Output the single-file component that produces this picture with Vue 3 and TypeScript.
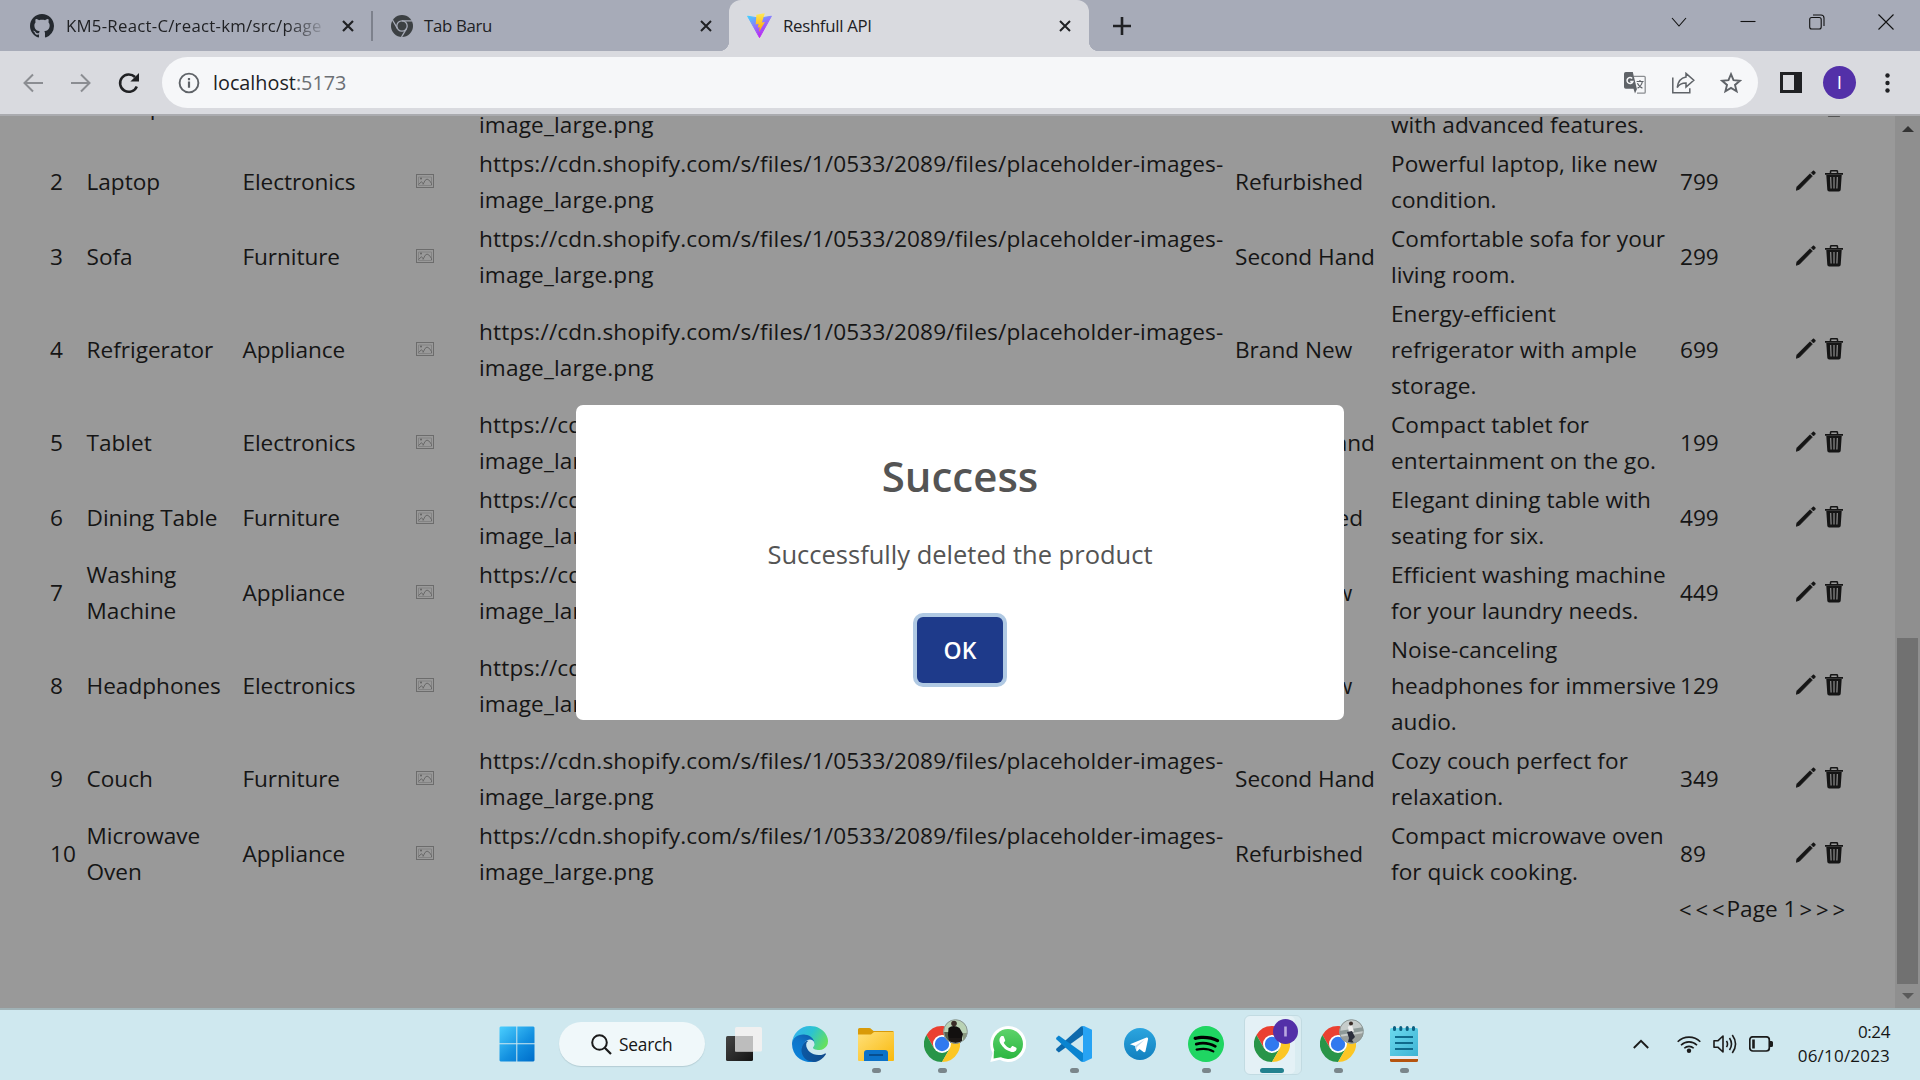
<script setup lang="ts">
interface Product {
  no: number
  name: string[]
  category: string
  condition: string
  description: string[]
  price: number
}

const products: Product[] = [
  { no: 1, name: ['Smartphone'], category: 'Electronics', condition: 'Brand New', description: ['Latest smartphone', 'with advanced features.'], price: 999 },
  { no: 2, name: ['Laptop'], category: 'Electronics', condition: 'Refurbished', description: ['Powerful laptop, like new', 'condition.'], price: 799 },
  { no: 3, name: ['Sofa'], category: 'Furniture', condition: 'Second Hand', description: ['Comfortable sofa for your', 'living room.'], price: 299 },
  { no: 4, name: ['Refrigerator'], category: 'Appliance', condition: 'Brand New', description: ['Energy-efficient', 'refrigerator with ample', 'storage.'], price: 699 },
  { no: 5, name: ['Tablet'], category: 'Electronics', condition: 'Second Hand', description: ['Compact tablet for', 'entertainment on the go.'], price: 199 },
  { no: 6, name: ['Dining Table'], category: 'Furniture', condition: 'Refurbished', description: ['Elegant dining table with', 'seating for six.'], price: 499 },
  { no: 7, name: ['Washing', 'Machine'], category: 'Appliance', condition: 'Brand New', description: ['Efficient washing machine', 'for your laundry needs.'], price: 449 },
  { no: 8, name: ['Headphones'], category: 'Electronics', condition: 'Brand New', description: ['Noise-canceling', 'headphones for immersive', 'audio.'], price: 129 },
  { no: 9, name: ['Couch'], category: 'Furniture', condition: 'Second Hand', description: ['Cozy couch perfect for', 'relaxation.'], price: 349 },
  { no: 10, name: ['Microwave', 'Oven'], category: 'Appliance', condition: 'Refurbished', description: ['Compact microwave oven', 'for quick cooking.'], price: 89 },
]

const imageUrl = ['https://cdn.shopify.com/s/files/1/0533/2089/files/placeholder-images-', 'image_large.png']

type App = 'tasks' | 'edge' | 'folder' | 'chrome' | 'whatsapp' | 'code' | 'telegram' | 'spotify' | 'notepad'
interface TaskItem { app: App; running?: boolean; active?: boolean; badge?: string }
const tasks: TaskItem[] = [
  { app: 'tasks' },
  { app: 'edge' },
  { app: 'folder', running: true },
  { app: 'chrome', running: true, badge: 'person' },
  { app: 'whatsapp' },
  { app: 'code', running: true },
  { app: 'telegram' },
  { app: 'spotify', running: true },
  { app: 'chrome', active: true, badge: 'initial' },
  { app: 'chrome', running: true, badge: 'photo' },
  { app: 'notepad', running: true },
]
</script>

<template>
  <div class="screen">
    <header class="tabs">
      <div class="tab first">
        <svg width="24" height="24" viewBox="0 0 16 16"><path fill="#24292f" d="M8 0C3.58 0 0 3.58 0 8c0 3.54 2.29 6.53 5.47 7.59.4.07.55-.17.55-.38 0-.19-.01-.82-.01-1.49-2.01.37-2.53-.49-2.69-.94-.09-.23-.48-.94-.82-1.13-.28-.15-.68-.52-.01-.53.63-.01 1.08.58 1.23.82.72 1.21 1.87.87 2.33.66.07-.52.28-.87.51-1.07-1.78-.2-3.64-.89-3.64-3.95 0-.87.31-1.59.82-2.15-.08-.2-.36-1.02.08-2.12 0 0 .67-.21 2.2.82.64-.18 1.32-.27 2-.27.68 0 1.36.09 2 .27 1.53-1.04 2.2-.82 2.2-.82.44 1.1.16 1.92.08 2.12.51.56.82 1.27.82 2.15 0 3.07-1.87 3.75-3.65 3.95.29.25.54.73.54 1.48 0 1.07-.01 1.93-.01 2.2 0 .21.15.46.55.38A8.013 8.013 0 0016 8c0-4.42-3.58-8-8-8z" /></svg>
        <span class="label fade">KM5-React-C/react-km/src/page</span>
        <svg class="x" width="12" height="12" viewBox="0 0 12 12"><path d="M1 1l10 10M11 1L1 11" stroke="#202124" stroke-width="2.2" /></svg>
      </div>
      <i class="sep"></i>
      <div class="tab second">
        <svg width="22" height="22" viewBox="0 0 22 22">
          <circle cx="11" cy="11" r="11" fill="#3c4043" />
          <g stroke="#a7abb8" stroke-width="1.3" fill="none"><circle cx="11" cy="11" r="5.2" /><path d="M11 5.8H21M6.5 13.6L1.5 5M15.5 13.6L10.5 22" /></g>
          <circle cx="11" cy="11" r="3.8" fill="#3c4043" />
        </svg>
        <span class="label">Tab Baru</span>
        <svg class="x" width="12" height="12" viewBox="0 0 12 12"><path d="M1 1l10 10M11 1L1 11" stroke="#202124" stroke-width="2" /></svg>
      </div>
      <div class="tab current">
        <svg width="25" height="25" viewBox="0 0 25 25">
          <defs>
            <linearGradient id="vite" x1="0" y1="0" x2=".6" y2="1"><stop offset="0" stop-color="#41d1ff" /><stop offset=".5" stop-color="#8f75ff" /><stop offset="1" stop-color="#c417ef" /></linearGradient>
            <linearGradient id="bolt" x1="0" y1="0" x2="0" y2="1"><stop offset="0" stop-color="#ffea55" /><stop offset="1" stop-color="#ffa000" /></linearGradient>
          </defs>
          <path d="M.6 3.2L12.5 5.2 24.4 3.2 12.5 24.6z" fill="url(#vite)" stroke="url(#vite)" stroke-linejoin="round" />
          <path d="M17.8.2L9.4 1.8 8.7 11.4l2.9-.7-.8 4 2-.6-.8 5L17.9 9l-3 .5z" fill="url(#bolt)" />
        </svg>
        <span class="label">Reshfull API</span>
        <svg class="x" width="12" height="12" viewBox="0 0 12 12"><path d="M1 1l10 10M11 1L1 11" stroke="#202124" stroke-width="2" /></svg>
      </div>
      <svg class="plus" width="18" height="18" viewBox="0 0 18 18"><path d="M9 0v18M0 9h18" stroke="#202124" stroke-width="2.6" /></svg>
      <div class="window">
        <svg width="16" height="16" viewBox="0 0 16 16"><path d="M1 4l7 8 7-8" /></svg>
        <svg width="16" height="16" viewBox="0 0 16 16"><path d="M.5 7.500h15" /></svg>
        <svg width="16" height="16" viewBox="0 0 16 16"><rect x=".7" y="3.5" width="11.5" height="11.5" rx="2" /><path d="M4 1h8q3 0 3 3v8" /></svg>
        <svg width="16" height="16" viewBox="0 0 16 16"><path d="M.5.5l15 15M15.5.5l-15 15" /></svg>
      </div>
    </header>

    <nav class="toolbar">
      <svg class="nav" width="20" height="20" viewBox="0 0 20 20"><path d="M20 10H2M10 1.5L1.5 10l8.5 8.5" /></svg>
      <svg class="nav" width="20" height="20" viewBox="0 0 20 20"><path d="M0 10h18M10 1.5l8.5 8.5-8.5 8.5" /></svg>
      <svg class="reload" width="22" height="22" viewBox="0 0 22 22"><path d="M18.8 14.500A8.700 8.700 0 1 1 17 5" fill="none" stroke="#202124" stroke-width="2.500" /><path d="M21 1v8.600h-8.600z" fill="#202124" /></svg>
      <div class="omnibox">
        <svg width="22" height="22" viewBox="0 0 22 22"><circle cx="11" cy="11" r="9.4" fill="none" stroke="#5f6368" stroke-width="1.9" /><path d="M11 9.6v6.2M11 6v2.2" stroke="#5f6368" stroke-width="2.2" /></svg>
        <span class="url">localhost<em>:5173</em></span>
        <svg class="tool" width="22" height="22" viewBox="0 0 22 22">
          <path d="M10 4.3h10.2q1 0 1 1v14.9q0 1-1 1H13" fill="none" stroke="#8a8d91" stroke-width="1.3" />
          <path d="M1.8 0h7l4 16.8H1.8Q0 16.800 0 15V1.800Q0 0 1.800 0zM9.500 16.800h3.600L11 21.500z" fill="#5f6368" />
          <path d="M8.200 6.400a3 3 0 1 0 .7 3H6.200" fill="none" stroke="#f6f7f9" stroke-width="1.500" />
          <path d="M12.600 9.500h7M16 8v1.500M18.400 9.500c-.6 3-2.600 5.400-4.800 6.600M13.400 11.200c1 2.200 2.800 4 5 4.900" fill="none" stroke="#5f6368" stroke-width="1.200" />
        </svg>
        <svg class="tool" width="23" height="22" viewBox="0 0 23 22"><path d="M.8 5.500v15.300h17v-4.500M14 1.400l7.800 6.800-7.800 6.800v-4C9.600 11 7 12.500 5.200 15.500 6 9.500 9 5.800 14 5z" fill="none" stroke="#5f6368" stroke-width="1.500" /></svg>
        <svg class="tool" width="22" height="22" viewBox="0 0 22 22"><path d="M11 2.200l2.500 6 6.500.5-5 4.200 1.600 6.400L11 15.900l-5.600 3.400L7 12.900 2 8.700l6.500-.5z" fill="none" stroke="#5f6368" stroke-width="1.900" /></svg>
      </div>
      <svg class="panel" width="22" height="21" viewBox="0 0 22 21"><path d="M0 0h22v21H0zM3 3v15h11V3z" fill="#202124" fill-rule="evenodd" /></svg>
      <span class="avatar">I</span>
      <svg class="more" width="5" height="20" viewBox="0 0 5 20"><g fill="#202124"><circle cx="2.500" cy="2.500" r="2.200" /><circle cx="2.500" cy="10" r="2.200" /><circle cx="2.500" cy="17.500" r="2.200" /></g></svg>
    </nav>

    <main class="viewport">
      <div class="page">
        <div class="table">
          <div v-for="p in products" :key="p.no" class="row">
            <div>{{ p.no }}</div>
            <div class="name"><span v-for="l in p.name" :key="l">{{ l }}</span></div>
            <div class="cat">{{ p.category }}</div>
            <div>
              <svg class="broken" width="18" height="14" viewBox="0 0 18 14"><rect x=".5" y=".5" width="17" height="13" fill="none" stroke="#6c6c6c" /><path d="M2.500 11.500v-8.500h13v8.500z" fill="none" stroke="#838383" /><circle cx="5" cy="4.500" r="1" fill="#626262" /><path d="M2.500 10.500l3-2.800 2 2.500M7 10.500l2-4 2-1.500 2.500 1.500 2 3v1.500" fill="none" stroke="#686868" /></svg>
            </div>
            <div class="link"><span>{{ imageUrl[0] }}</span><span>{{ imageUrl[1] }}</span></div>
            <div class="cond">{{ p.condition }}</div>
            <div class="desc"><span v-for="l in p.description" :key="l">{{ l }}</span></div>
            <div>{{ p.price }}</div>
            <div class="actions">
              <svg width="20" height="21" viewBox="0 0 20 21"><path d="M.3 20.300L1 16.800 14 3.800l2.300 2.300L3.400 19.200z" fill="#151515" stroke="#151515" stroke-width=".8" stroke-linejoin="round" /><path d="M15.200 2.700l1.500-1.500q.8-.8 1.600 0l.7.700q.8.800 0 1.600L17.500 5z" fill="#151515" stroke="#151515" stroke-width=".6" /></svg>
              <svg width="18" height="22" viewBox="0 0 18 22"><path d="M5.500 3.200V1.700q0-1 1-1h5q1 0 1 1v1.500" fill="none" stroke="#151515" stroke-width="1.500" /><path d="M0 2.900h18v1.800H0zM1.300 5h15.400l-1 14.700q-.1 1.800-1.900 1.800H4.200q-1.800 0-1.900-1.800z" fill="#151515" /><path d="M5.700 7l.4 11.500M9 7v11.500M12.300 7l-.4 11.500" stroke="#999" stroke-width="1.100" /></svg>
            </div>
          </div>
        </div>
        <div class="pager"><span>&lt;</span><span>&lt;</span><span>&lt;</span><b>Page 1</b><span>&gt;</span><span>&gt;</span><span>&gt;</span></div>
      </div>
      <div class="scrollbar"><i class="up"></i><i class="thumb"></i><i class="down"></i></div>
      <section class="modal">
        <h2>Success</h2>
        <p>Successfully deleted the product</p>
        <button>OK</button>
      </section>
    </main>

    <footer class="taskbar">
      <svg class="start" width="36" height="36" viewBox="0 0 36 36">
        <defs><linearGradient id="win" gradientUnits="userSpaceOnUse" x1="0" y1="0" x2="32" y2="36"><stop offset="0" stop-color="#4cd0ff" /><stop offset=".6" stop-color="#1390e0" /><stop offset="1" stop-color="#0070cc" /></linearGradient></defs>
        <path d="M1.500.500H17.300V17.200H.500V1.500zM18.300.500H34.500l1 1V17.200h-17.200zM.500 18.300H17.300v17.200H1.500l-1-1zM18.300 18.300h17.200v16.200l-1 1h-16.200z" fill="url(#win)" />
      </svg>
      <div class="search">
        <svg width="21" height="21" viewBox="0 0 21 21"><circle cx="8.500" cy="8.500" r="7.300" fill="none" stroke="#1b1b1b" stroke-width="2" /><path d="M13.500 13.500l6.500 6.500" stroke="#1b1b1b" stroke-width="2.200" /></svg>
        <span>Search</span>
      </div>
      <div v-for="(t, i) in tasks" :key="i" class="task" :class="{ active: t.active }">
        <svg v-if="t.app === 'tasks'" width="36" height="36" viewBox="0 0 36 36">
          <defs><linearGradient id="tv" x1="0" y1="0" x2="1" y2="1"><stop offset="0" stop-color="#444" /><stop offset="1" stop-color="#141414" /></linearGradient></defs>
          <rect y="10" width="27" height="25" rx="1.500" fill="url(#tv)" /><rect x="9" y="1" width="27" height="24.500" rx="1.500" fill="#f0f0f0" /><path d="M9 10h18v15.500H9z" fill="#bdbdbd" />
        </svg>
        <svg v-else-if="t.app === 'edge'" width="36" height="36" viewBox="0 0 256 256">
          <defs>
            <linearGradient id="e1" x1="0" y1="0" x2="1" y2="0"><stop offset="0" stop-color="#0c59a4" /><stop offset="1" stop-color="#114a8b" /></linearGradient>
            <linearGradient id="e2" x1=".8" y1="0" x2=".3" y2="1"><stop offset="0" stop-color="#0f5aa8" /><stop offset=".4" stop-color="#0f74c8" /><stop offset="1" stop-color="#0a84dc" /></linearGradient>
            <linearGradient id="e3" x1="0" y1=".2" x2="1" y2=".6"><stop offset="0" stop-color="#35b1f1" /><stop offset=".5" stop-color="#2cc3d0" /><stop offset="1" stop-color="#66e05e" /></linearGradient>
          </defs>
          <path fill="url(#e1)" d="M235.680 195.460a93.730 93.730 0 0 1-10.540 4.710 101.870 101.870 0 0 1-35.900 6.460c-47.320 0-88.540-32.550-88.540-74.320a31.480 31.480 0 0 1 16.430-27.310c-42.800 1.800-53.800 46.400-53.800 72.530 0 73.880 68.090 81.370 82.760 81.370 7.910 0 19.840-2.300 27-4.560l1.310-.440a128.340 128.340 0 0 0 66.600-52.800 4 4 0 0 0-5.320-5.640z" />
          <path fill="url(#e2)" d="M105.730 241.420a79.200 79.200 0 0 1-22.740-21.340 80.720 80.720 0 0 1 29.530-120c3.120-1.470 8.450-4.130 15.540-4a32.350 32.350 0 0 1 25.690 13 31.880 31.880 0 0 1 6.360 18.660c0-.210 24.460-79.600-80-79.600-43.900 0-80 41.660-80 78.210a130.150 130.150 0 0 0 12.110 56 128 128 0 0 0 156.380 67.110 75.550 75.550 0 0 1-62.780-8z" />
          <path fill="url(#e3)" d="M152.330 148.860c-.810 1.050-3.300 2.500-3.300 5.660 0 2.610 1.700 5.120 4.720 7.230 14.380 10 41.490 8.680 41.560 8.680a59.560 59.560 0 0 0 30.270-8.350A61.380 61.380 0 0 0 256 109.190c.260-22.410-8-37.310-11.340-43.910C223.460 23.840 177.720 0 128 0A128 128 0 0 0 0 126.200c.480-36.540 36.800-66.050 80-66.050 3.500 0 23.460.340 42 10.070 16.340 8.580 24.900 18.940 30.850 29.210 6.180 10.670 7.280 24.150 7.280 29.520s-2.740 13.330-7.800 19.910z" />
        </svg>
        <svg v-else-if="t.app === 'folder'" width="36" height="36" viewBox="0 0 36 36">
          <defs><linearGradient id="fd" x1="0" y1="0" x2="1" y2="1"><stop offset="0" stop-color="#ffe07a" /><stop offset="1" stop-color="#f9b90c" /></linearGradient></defs>
          <path d="M0 10V3.500Q0 2 1.500 2H11q1.500 0 2.500 1.200L15.500 5H34.500q1.500 0 1.500 1.500V10z" fill="#d99a08" /><path d="M0 8.500h13l3-2.500h20v28q0 1-1 1H1q-1 0-1-1z" fill="url(#fd)" /><path d="M6 35V27q0-3 3-3h18q3 0 3 3v8z" fill="#0b72c9" /><path d="M11 29h14" stroke="#064a8a" stroke-width="1.800" />
        </svg>
        <svg v-else-if="t.app === 'chrome'" width="36" height="36" viewBox="0 0 36 36">
          <path fill="#ea4031" d="M2.410 9A18 18 0 0 1 33.590 9H18L10.200 22.500z" /><path fill="#289548" d="M2.410 9L10.200 22.500 25.800 22.500 18 36A18 18 0 0 1 2.410 9z" /><path fill="#fcc624" d="M33.590 9H18l7.800 13.500L18 36A18 18 0 0 0 33.590 9z" />
          <circle cx="18" cy="18" r="9" fill="#fff" /><circle cx="18" cy="18" r="7.200" fill="#3079ef" />
        </svg>
        <svg v-else-if="t.app === 'whatsapp'" width="36" height="36" viewBox="0 0 36 36">
          <defs><linearGradient id="wa" x1="0" y1="0" x2="0" y2="1"><stop offset="0" stop-color="#5dd36a" /><stop offset="1" stop-color="#2bb641" /></linearGradient></defs>
          <path d="M18 0A18 18 0 1 1 9.600 33.800L.300 36 2.600 27A18 18 0 0 1 18 0z" fill="#fff" /><circle cx="18" cy="18" r="15" fill="url(#wa)" />
          <path d="M4 24L3.600 32.600 12 31z" fill="#35bb4a" />
          <g transform="translate(0.900 1) scale(1.420)"><path fill="#fff" d="M17.472 14.382c-.297-.149-1.758-.867-2.030-.967-.273-.099-.471-.148-.670.150-.197.297-.767.966-.940 1.164-.173.199-.347.223-.644.075-.297-.150-1.255-.463-2.390-1.475-.883-.788-1.480-1.761-1.653-2.059-.173-.297-.018-.458.130-.606.134-.133.298-.347.446-.520.149-.174.198-.298.298-.497.099-.198.050-.371-.025-.520-.075-.149-.669-1.612-.916-2.207-.242-.579-.487-.500-.669-.510-.173-.008-.371-.010-.570-.010-.198 0-.520.074-.792.372-.272.297-1.040 1.016-1.040 2.479 0 1.462 1.065 2.875 1.213 3.074.149.198 2.096 3.200 5.077 4.487.709.306 1.262.489 1.694.625.712.227 1.360.195 1.871.118.571-.085 1.758-.719 2.006-1.413.248-.694.248-1.289.173-1.413-.074-.124-.272-.198-.570-.347z" /></g>
        </svg>
        <svg v-else-if="t.app === 'code'" width="36" height="36" viewBox="0 0 36 36">
          <path d="M2.800 26.500L.500 24.600Q-.300 23.500.500 22.500L25 .500 27 0v9z" fill="#0d69ac" /><path d="M2.800 9.500L.500 11.400Q-.300 12.500.500 13.500L25 35.500l2 .500V27z" fill="#0a84d0" /><path d="M26 .3L28 0l8 3.800v28.400L28 36l-2-.300 1-1.700V2z" fill="#27a3f4" />
        </svg>
        <svg v-else-if="t.app === 'telegram'" width="32" height="32" viewBox="0 0 32 32">
          <defs><linearGradient id="tg" x1="0" y1="0" x2="0" y2="1"><stop offset="0" stop-color="#2ba5df" /><stop offset="1" stop-color="#1280bf" /></linearGradient></defs>
          <circle cx="16" cy="16" r="16" fill="url(#tg)" /><path d="M6 16.200L22.500 9.600q1.800-.5 1.600 1.400L21.500 23.300q-.5 1.500-2 .7l-4-3-2.200 2.200q-.8.5-1-.5L11 18z" fill="#fff" /><path d="M11 18l9.500-6.300-7.800 7.600-.4 3.800z" fill="#b9d9ee" />
        </svg>
        <svg v-else-if="t.app === 'spotify'" width="36" height="36" viewBox="0 0 24 24">
          <circle cx="12" cy="12" r="11.500" fill="#000" /><path fill="#1fd662" d="M12 0C5.400 0 0 5.400 0 12s5.400 12 12 12 12-5.400 12-12S18.660 0 12 0zm5.521 17.340c-.240.359-.660.480-1.021.240-2.820-1.740-6.360-2.101-10.561-1.141-.418.122-.779-.179-.899-.539-.120-.421.180-.780.540-.900 4.560-1.021 8.520-.600 11.640 1.320.420.180.479.659.301 1.020zm1.440-3.300c-.301.420-.841.600-1.262.300-3.239-1.980-8.159-2.580-11.939-1.380-.479.120-1.020-.120-1.140-.600-.120-.480.120-1.021.600-1.141C9.600 9.900 15 10.561 18.720 12.840c.361.181.540.780.241 1.200zm.120-3.360C15.240 8.400 8.820 8.160 5.160 9.301c-.600.179-1.200-.181-1.380-.721-.180-.601.180-1.200.720-1.381 4.260-1.260 11.280-1.020 15.721 1.621.539.300.719 1.020.419 1.560-.299.421-1.020.599-1.559.300z" />
        </svg>
        <svg v-else width="28" height="36" viewBox="0 0 28 36">
          <defs><linearGradient id="np" x1="0" y1="0" x2="1" y2="1"><stop offset="0" stop-color="#6bd9ee" /><stop offset="1" stop-color="#3fb4d4" /></linearGradient></defs>
          <path d="M0 30h28v4.500Q28 36 26.500 36h-25Q0 36 0 34.500z" fill="#b5540f" /><path d="M0 28h28v5H0z" fill="#ececf0" /><path d="M0 4q0-2 1.500-2h25Q28 2 28 4v26H0z" fill="url(#np)" /><path d="M4.500 1.500v2M10.800 1.500v2M17.200 1.500v2M23.500 1.500v2" stroke="#0d5f80" stroke-width="3" stroke-linecap="round" /><path d="M5 11h18M5 17h18M5 23h18" stroke="#0f6a8c" stroke-width="2" />
        </svg>
        <svg v-if="t.badge" class="badge" width="25" height="25" viewBox="0 0 25 25">
          <defs><clipPath id="round"><circle cx="12.500" cy="12.500" r="12" /></clipPath></defs>
          <g v-if="t.badge === 'person'" clip-path="url(#round)"><path d="M0 0h25v25H0z" fill="#b9d2b4" /><path d="M0 13h6v12H0z" fill="#55604e" /><path d="M20 14h5v11h-5z" fill="#8b9a80" /><circle cx="11" cy="4.500" r="2.800" fill="#3a2c27" /><path d="M5.500 9q5-4 11 0l3.500 6-2 8H6l-1-7z" fill="#12100f" /><path d="M6 19h13v6H6z" fill="#1c1816" /></g>
          <g v-else-if="t.badge === 'photo'" clip-path="url(#round)"><path d="M0 0h25v25H0z" fill="#c6cccb" /><path d="M0 12l25-4v4L0 16z" fill="#8d9998" /><path d="M0 18l25-4v11H0z" fill="#9a9f9c" /><circle cx="12" cy="4.500" r="2" fill="#3a2c28" /><path d="M9 7.500l4-1 2 6-5 2z" fill="#eee" /><path d="M8 13l5-1 3 6-3 3 2 3-6-1 1-4z" fill="#2b2e3c" /></g>
          <circle v-else cx="12.500" cy="12.500" r="12.500" fill="#5330a8" />
          <circle v-if="t.badge !== 'initial'" cx="12.500" cy="12.500" r="11.800" fill="none" stroke="#8b9796" stroke-width="1" />
          <path v-else d="M12.500 7.500v10" stroke="#b9a8e0" stroke-width="2.600" />
        </svg>
        <i v-if="t.running || t.active" class="dot"></i>
      </div>
      <div class="tray">
        <svg width="16" height="10" viewBox="0 0 16 10"><path d="M.8 9L8 1.800 15.200 9" fill="none" stroke="#1b1b1b" stroke-width="1.900" /></svg>
        <svg class="wifi" width="24" height="18" viewBox="0 0 24 18"><g fill="none" stroke="#1b1b1b" stroke-width="1.600"><path d="M.7 6.800a16 16 0 0 1 22.600 0M4 10.200a11.300 11.300 0 0 1 16 0M7.300 13.300a6.600 6.600 0 0 1 9.400 0" /></g><circle cx="12" cy="15.700" r="2.200" fill="#1b1b1b" /></svg>
        <svg class="vol" width="24" height="20" viewBox="0 0 24 20"><g fill="none" stroke="#1b1b1b" stroke-width="1.600" stroke-linejoin="round"><path d="M1 6.800h3.800L10 2v16l-5.200-4.800H1zM13.500 6.800q2 3.200 0 6.400M16.500 4q4 6 0 12M19.300 1q6.500 9 0 18" /></g></svg>
        <svg class="bat" width="24" height="16" viewBox="0 0 24 16"><rect x=".8" y=".8" width="19.500" height="14.200" rx="3" fill="none" stroke="#1b1b1b" stroke-width="1.700" /><path d="M3.200 3.500h2.600v9H3.200zM21 5h1.500q1.500 0 1.500 1.500v3q0 1.500-1.500 1.500H21z" fill="#1b1b1b" /></svg>
        <div class="clock"><span>0:24</span><span class="date">06/10/2023</span></div>
      </div>
    </footer>
  </div>
</template>

<style>
html, body { margin: 0; overflow: hidden; }
</style>

<style scoped>
* { box-sizing: border-box; }
svg { display: block; flex: none; }
.screen { width: 1920px; height: 1080px; display: flex; flex-direction: column; overflow: hidden; font-family: "Open Sans", "Noto Sans", sans-serif; color: #151515; background: #999; }

.tabs { height: 51px; flex: none; display: flex; align-items: center; background: #a7abb8; padding-left: 30px; position: relative; }
.tab { display: flex; align-items: center; height: 51px; }
.tab .label { font-size: 16.8px; line-height: 24px; white-space: nowrap; color: #202124; letter-spacing: -0.3px; }
.tab .x { margin-left: auto; }
.first { width: 324px; }
.tab .fade { margin-left: 12px; width: 258px; overflow: hidden; letter-spacing: 0.25px; mask-image: linear-gradient(90deg, #000 220px, transparent 262px); }
.sep { width: 2px; height: 30px; background: #7d818c; margin: 0 18px 0 17px; }
.second { width: 321px; }
.second .label { margin-left: 11px; }
.current { width: 360px; margin-left: 17px; padding: 0 18px; background: #d9dadf; border-radius: 12px 12px 0 0; position: relative; }
.current .label { margin-left: 11px; }
.current::before, .current::after { content: ""; position: absolute; bottom: 0; width: 10px; height: 10px; }
.current::before { left: -10px; background: radial-gradient(circle at 0 0, transparent 10px, #d9dadf 10.5px); }
.current::after { right: -10px; background: radial-gradient(circle at 100% 0, transparent 10px, #d9dadf 10.5px); }
.plus { margin-left: 24px; }
.window { margin-left: auto; display: flex; gap: 53px; padding-right: 26px; margin-top: -8px; }
.window svg { fill: none; stroke: #111; stroke-width: 1.1; }

.toolbar { height: 65px; flex: none; display: flex; align-items: center; background: #d9dadf; border-bottom: 2px solid #aaabaf; padding-left: 23px; }
.nav { fill: none; stroke: #8b8d92; stroke-width: 2; margin-right: 28px; }
.reload { margin-left: -1px; }
.omnibox { margin-left: 22px; width: 1596px; height: 51px; border-radius: 26px; background: #f6f7f9; display: flex; align-items: center; padding: 0 16px; }
.url { margin-left: 13px; margin-right: auto; font-size: 19.8px; line-height: 30px; color: #202124; }
.url em { font-style: normal; color: #6b6f74; }
.tool + .tool { margin-left: 25.5px; }
.panel { margin-left: 22px; }
.avatar { width: 33px; height: 33px; border-radius: 50%; background: #5330a8; color: #fff; font: 19px/33px "Open Sans", sans-serif; text-align: center; margin-left: 21px; }
.more { margin-left: 29px; }

.viewport { flex: 1; display: flex; position: relative; overflow: hidden; background: #999; border-bottom: 2px solid #a0b2b6; }
.page { flex: 1; margin-top: -45px; padding-left: 50px; font-size: 22.6px; line-height: 36px; white-space: nowrap; }
.table { display: flex; flex-direction: column; gap: 3px; }
.row { display: grid; grid-template-columns: 36.5px 156px 172.5px 64px 756px 156px 289px 100px 64px; align-items: center; min-height: 72px; }
.row span { display: block; }
.cat { letter-spacing: -0.08px; }
.link { letter-spacing: 0.16px; }
.desc { letter-spacing: 0.06px; }
.broken { margin-left: 1px; margin-top: -3px; }
.actions { display: flex; gap: 9px; padding-left: 16px; margin-top: -3px; }
.pager { margin-top: 1px; padding-left: 1629px; display: flex; }
.pager span { width: 16.5px; font-size: 22px; }
.pager b { font-weight: 400; width: 73px; margin-left: -2px; }
.scrollbar { width: 25px; background: #8f8f8f; display: flex; flex-direction: column; align-items: center; flex: none; }
.up { border: 6px solid transparent; border-top: 0; border-bottom: 6px solid #333; margin-top: 10px; }
.thumb { width: 21px; height: 346px; background: #717171; margin-top: 506px; }
.down { border: 6px solid transparent; border-bottom: 0; border-top: 6px solid #5a5a5a; margin-top: 9px; }
.modal { position: absolute; left: 576px; top: 289px; width: 768px; height: 315px; background: #fff; border-radius: 7px; display: flex; flex-direction: column; align-items: center; color: #545454; }
.modal h2 { margin: 43px 0 0; font-size: 42px; line-height: 56px; font-weight: 600; }
.modal p { margin: 30px 0 0; font-size: 25.5px; line-height: 40px; }
.modal button { margin-top: 43px; width: 86px; height: 66px; border: 0; border-radius: 6px; background: #1e3a8a; color: #fff; font: 600 23px/66px "Open Sans", sans-serif; padding: 0; box-shadow: 0 0 0 4px #b0c9e3; }

.taskbar { height: 70px; flex: none; display: flex; align-items: center; background: #cfe8ef; padding-left: 499px; }
.start { margin-top: -2px; }
.search { width: 146px; height: 44px; margin: -2px 6px 0 24px; border-radius: 22px; background: #f0f8fa; box-shadow: 0 1px 1px #b4cdd4; display: flex; align-items: center; padding-left: 32px; font-size: 17.3px; }
.search span { margin-left: 7px; letter-spacing: -0.2px; }
.task { width: 66px; height: 70px; display: flex; align-items: center; justify-content: center; padding-bottom: 2px; position: relative; }
.task > svg { position: relative; }
.active::before { content: ""; position: absolute; left: 5px; top: 5px; width: 56px; height: 58px; border-radius: 6px; background: #e4f1f6; border: 1px solid #c2dbe2; box-shadow: inset -6px 0 0 #d9ecf1; }
.task > .badge { position: absolute; left: 34px; top: 9px; }
.dot { position: absolute; bottom: 7px; left: 29px; width: 9px; height: 5px; border-radius: 3px; background: #7a868b; }
.active .dot { width: 24px; left: 21px; background: #23818f; }
.tray { margin-left: auto; display: flex; align-items: center; padding-right: 30px; margin-top: -2px; }
.wifi { margin-left: 28px; }
.vol, .bat { margin-left: 12px; }
.clock { display: flex; flex-direction: column; align-items: flex-end; width: 117px; font-size: 17px; line-height: 24px; letter-spacing: -0.4px; }
.date { letter-spacing: 0.2px; }
</style>
